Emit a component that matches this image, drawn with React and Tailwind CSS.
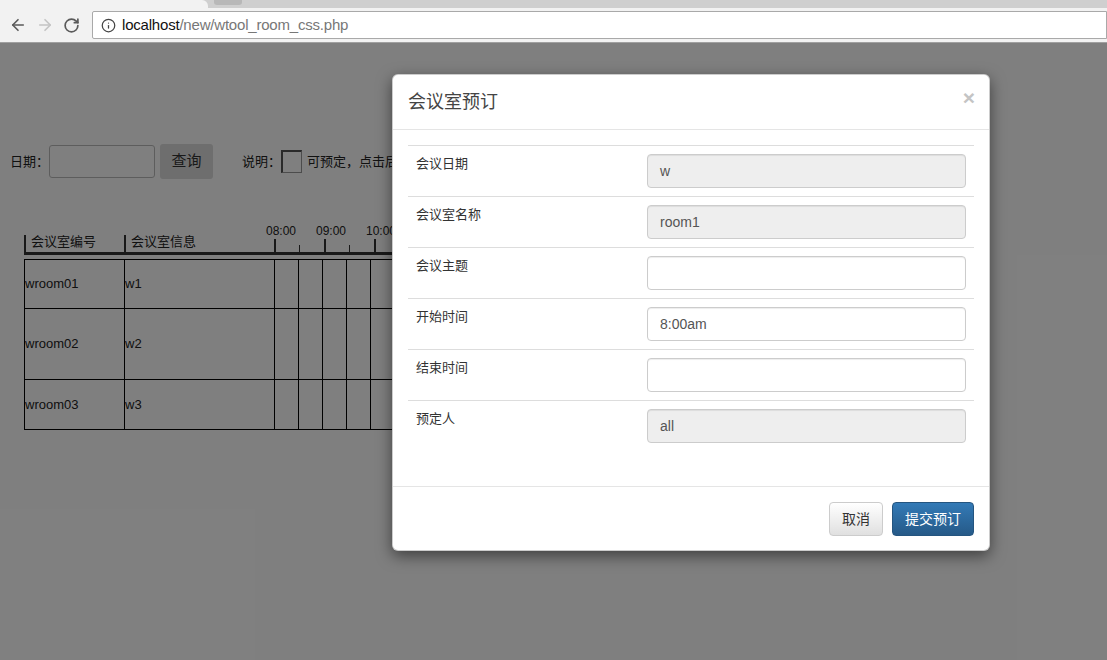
import React from 'react';
import { ArrowLeft, ArrowRight, RotateCw, Info } from 'lucide-react';

const rooms = [
  { id: 'wroom01', info: 'w1', h: 'h-[49px]' },
  { id: 'wroom02', info: 'w2', h: 'h-[71px]' },
  { id: 'wroom03', info: 'w3', h: 'h-[50px]' },
];

const hours = ['08:00', '09:00', '10:00', '11:00', '12:00', '13:00', '14:00', '15:00', '16:00', '17:00', '18:00', '19:00', '20:00'];
const slots = Array.from({ length: 26 }, (_, i) => i);

const fields = [
  { label: '会议日期', value: 'w', disabled: true },
  { label: '会议室名称', value: 'room1', disabled: true },
  { label: '会议主题', value: '' },
  { label: '开始时间', value: '8:00am' },
  { label: '结束时间', value: '' },
  { label: '预定人', value: 'all', disabled: true },
];

function BrowserBar() {
  return (
    <div className="h-[43px] bg-[#f2f2f2] border-b border-[#a0a0a0] flex flex-col">
      <div className="h-[8px] flex bg-[#cfcfcf]">
        <div className="w-[208px] bg-[#f2f2f2] rounded-tr-[6px]" />
        <div className="w-[28px] ml-[6px] h-[5px] bg-[#b8b8b8] rounded-b-[3px]" />
      </div>
      <div className="flex-1 flex items-center pr-0">
        <div className="w-[92px] flex items-center pl-[9px] gap-[9px] text-[#5a5a5a]">
          <ArrowLeft size={18} strokeWidth={2.2} />
          <ArrowRight size={18} strokeWidth={2.2} className="text-[#c4c4c4]" />
          <RotateCw size={17} strokeWidth={2.4} />
        </div>
        <div className="flex-1 h-[28px] bg-white border border-[#a9a9a9] rounded-l-[2px] flex items-center pl-[8px] text-[15px] tracking-[-0.2px]">
          <Info size={15} className="text-[#444] mr-[6px]" />
          <span className="text-[#111]">localhost</span>
          <span className="text-[#777]">/new/wtool_room_css.php</span>
        </div>
      </div>
    </div>
  );
}

function Schedule() {
  return (
    <div className="pl-[24px]">
      <div className="flex h-[31px] border-b-[3px] border-[#333] w-max">
        <div className="w-[100px] flex items-end">
          <div className="border-l-2 border-[#333] h-[17px] pl-[5px] text-[13px] leading-[14px] text-[#222]">会议室编号</div>
        </div>
        <div className="w-[150px] flex items-end">
          <div className="border-l-2 border-[#333] h-[17px] pl-[5px] text-[13px] leading-[14px] text-[#222]">会议室信息</div>
        </div>
        {hours.map((h) => (
          <div key={h} className="w-[50px] flex flex-col justify-between">
            <div className="-ml-[8px] text-[12px] leading-[12px] text-[#222] pt-[1px]">{h}</div>
            <div className="flex items-end h-[13px]">
              <div className="w-[25px] h-[13px] border-l-2 border-[#333]" />
              <div className="w-[25px] h-[7px] border-l border-[#333]" />
            </div>
          </div>
        ))}
      </div>
      <table className="mt-[4px] border-collapse border border-black text-[13px] text-[#222]">
        <tbody>
          {rooms.map((r) => (
            <tr key={r.id} className={r.h}>
              <td className="w-[100px] border border-black p-0 align-middle">{r.id}</td>
              <td className="w-[150px] border border-black p-0 align-middle">{r.info}</td>
              {slots.map((s) => (
                <td key={s} className="w-[24px] min-w-[24px] border border-black p-0" />
              ))}
            </tr>
          ))}
        </tbody>
      </table>
    </div>
  );
}

function BookingModal() {
  return (
    <div className="absolute left-[392px] top-[31px] w-[598px] bg-white rounded-[6px] border border-black/20 shadow-[0_5px_15px_rgba(0,0,0,0.5)]">
      <div className="h-[55px] px-[15px] border-b border-[#e5e5e5] flex items-center justify-between">
        <h4 className="text-[18px] text-[#444] pt-[1px]">会议室预订</h4>
        <span className="text-[21px] font-bold text-[#c4c4c4] leading-none -mr-[1px] -mt-[9px]">×</span>
      </div>
      <div className="px-[15px] pt-[15px] pb-[15px]">
        <table className="w-full mb-[20px] border-collapse text-[13px] text-[#333]">
          <tbody>
            {fields.map((f) => (
              <tr key={f.label} className="border-t border-[#ddd]">
                <td className="w-[231px] p-[8px] align-top leading-[20px]">{f.label}</td>
                <td className="p-[8px]">
                  <div
                    className={
                      'h-[34px] px-[12px] flex items-center border border-[#ccc] rounded-[4px] shadow-[inset_0_1px_1px_rgba(0,0,0,0.075)] text-[14px] text-[#555] ' +
                      (f.disabled ? 'bg-[#eee]' : 'bg-white')
                    }
                  >
                    {f.value}
                  </div>
                </td>
              </tr>
            ))}
          </tbody>
        </table>
      </div>
      <div className="border-t border-[#e5e5e5] pt-[15px] pb-[14px] px-[15px] flex justify-end gap-[9px]">
        <button className="h-[34px] px-[12px] text-[14px] text-[#333] border border-[#ccc] rounded-[4px] bg-gradient-to-b from-white to-[#e0e0e0]">取消</button>
        <button className="h-[34px] px-[12px] text-[14px] text-white border border-[#245580] rounded-[4px] bg-gradient-to-b from-[#337ab7] to-[#265a88]">提交预订</button>
      </div>
    </div>
  );
}

export default function App() {
  return (
    <div className="w-[1107px] h-[660px] overflow-hidden bg-white" style={{ fontFamily: '"Liberation Sans", "Noto Sans CJK SC", sans-serif' }}>
      <BrowserBar />
      <div className="relative h-[617px] bg-white">
        <div className="pt-[101px]">
          <div className="flex items-center pl-[10px] text-[13px] text-[#222]">
            <span>日期：</span>
            <div className="w-[106px] h-[33px] border border-[#bbb] rounded-[3px] bg-white" />
            <button className="ml-[5px] w-[53px] h-[35px] bg-[#dcdcdc] rounded-[3px] text-[15px] text-[#333]">查询</button>
            <span className="ml-[29px]">说明：</span>
            <div className="w-[21px] h-[23px] border-l-2 border-t-2 border-r border-b border-[#555] border-r-[#999] border-b-[#999]" />
            <span className="ml-[5px]">可预定，点击后可以预订会议室</span>
          </div>
          <div className="mt-[45px]">
            <Schedule />
          </div>
        </div>
        <div className="absolute inset-0 bg-black/50" />
        <BookingModal />
      </div>
    </div>
  );
}
